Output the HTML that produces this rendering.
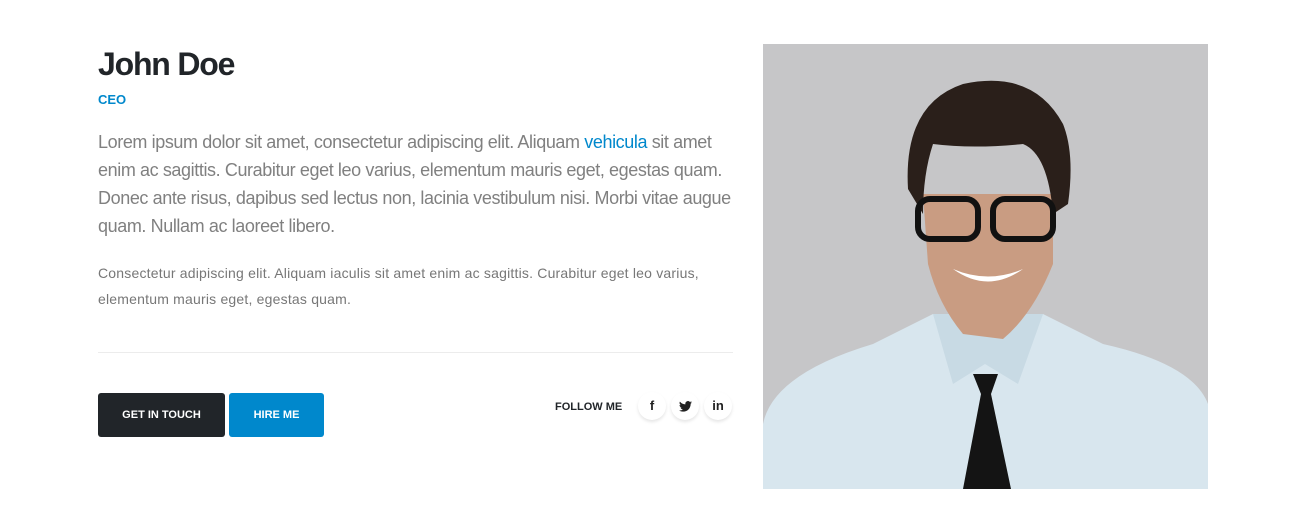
<!DOCTYPE html>
<html><head><style>
body{margin:0;width:1310px;height:518px;background:#fff;font-family:"Liberation Sans",sans-serif;position:relative;overflow:hidden}
.a{position:absolute}
h1{position:absolute;left:98px;top:46px;margin:0;font-size:32px;font-weight:bold;color:#212529;letter-spacing:-1.2px}
.ceo{left:98px;top:92px;font-size:13px;font-weight:bold;color:#0088cc}
.lead{left:98px;top:128px;font-size:18px;line-height:28px;color:#808080;white-space:nowrap;letter-spacing:-0.4px}
.lead span{color:#0088cc}
.small{left:98px;top:260px;font-size:14px;line-height:26px;color:#777;white-space:nowrap;letter-spacing:0.2px}
.hr{left:98px;top:352px;width:635px;height:1px;background:#ececec}
.btn{top:393px;height:44px;line-height:44px;font-size:11px;font-weight:bold;color:#fff;text-align:center;border-radius:3px}
.soc{top:392px;width:28px;height:28px;border-radius:50%;box-shadow:0 2px 3px rgba(0,0,0,.1);text-align:center;line-height:28px;font-weight:bold;font-size:13px;color:#222}
</style></head><body>
<h1>John Doe</h1>
<div class="a ceo">CEO</div>
<div class="a lead">Lorem ipsum dolor sit amet, consectetur adipiscing elit. Aliquam <span>vehicula</span> sit amet<br>enim ac sagittis. Curabitur eget leo varius, elementum mauris eget, egestas quam.<br>Donec ante risus, dapibus sed lectus non, lacinia vestibulum nisi. Morbi vitae augue<br>quam. Nullam ac laoreet libero.</div>
<div class="a small">Consectetur adipiscing elit. Aliquam iaculis sit amet enim ac sagittis. Curabitur eget leo varius,<br>elementum mauris eget, egestas quam.</div>
<div class="a hr"></div>
<div class="a btn" style="left:98px;width:127px;background:#212529">GET IN TOUCH</div>
<div class="a btn" style="left:229px;width:95px;background:#0088cc">HIRE ME</div>
<div class="a" style="left:555px;top:401px;font-size:11px;font-weight:bold;color:#212529">FOLLOW ME</div>
<div class="a soc" style="left:638px">f</div>
<div class="a soc" style="left:671px"><svg width="13" height="11" viewBox="0 0 24 20" style="margin-top:9px"><path d="M24 2.4a10 10 0 0 1-2.8.8A5 5 0 0 0 23.3.4a10 10 0 0 1-3.1 1.2A4.9 4.9 0 0 0 11.8 6 14 14 0 0 1 1.7.9a4.9 4.9 0 0 0 1.5 6.6A4.9 4.9 0 0 1 1 6.9a4.9 4.9 0 0 0 3.9 4.8 5 5 0 0 1-2.2.1 4.9 4.9 0 0 0 4.6 3.4A9.9 9.9 0 0 1 0 17.3 14 14 0 0 0 7.5 19.5c9.1 0 14-7.5 14-14v-.6A10 10 0 0 0 24 2.4z" fill="#222"/></svg></div>
<div class="a soc" style="left:704px">in</div>
<div class="a" style="left:763px;top:44px;width:445px;height:445px;background:#c6c6c8;overflow:hidden">
<svg width="445" height="445" viewBox="0 0 445 445">
<path d="M0 380 Q10 330 110 300 L170 270 L280 270 L340 300 Q430 320 445 360 L445 445 L0 445Z" fill="#d8e6ee"/>
<path d="M170 270 L190 340 L222 320 L255 340 L280 270Z" fill="#c8dae4"/>
<path d="M200 290 Q175 260 165 220 L160 150 L290 150 L290 220 Q270 270 240 295Z" fill="#c99c82"/>
<path d="M210 330 L235 330 L228 350 L248 445 L200 445 L218 350Z" fill="#141414"/>
<path d="M145 145 Q140 60 200 40 Q270 25 300 80 Q312 110 305 160 L290 170 Q285 110 260 100 Q210 105 170 100 Q160 130 160 170 Z" fill="#2a1f1a"/>
<rect x="155" y="155" width="60" height="40" rx="12" fill="none" stroke="#111" stroke-width="6"/>
<rect x="230" y="155" width="60" height="40" rx="12" fill="none" stroke="#111" stroke-width="6"/>
<path d="M190 225 Q225 250 260 225 Q225 240 190 225Z" fill="#fff"/>
</svg></div>
</body></html>
